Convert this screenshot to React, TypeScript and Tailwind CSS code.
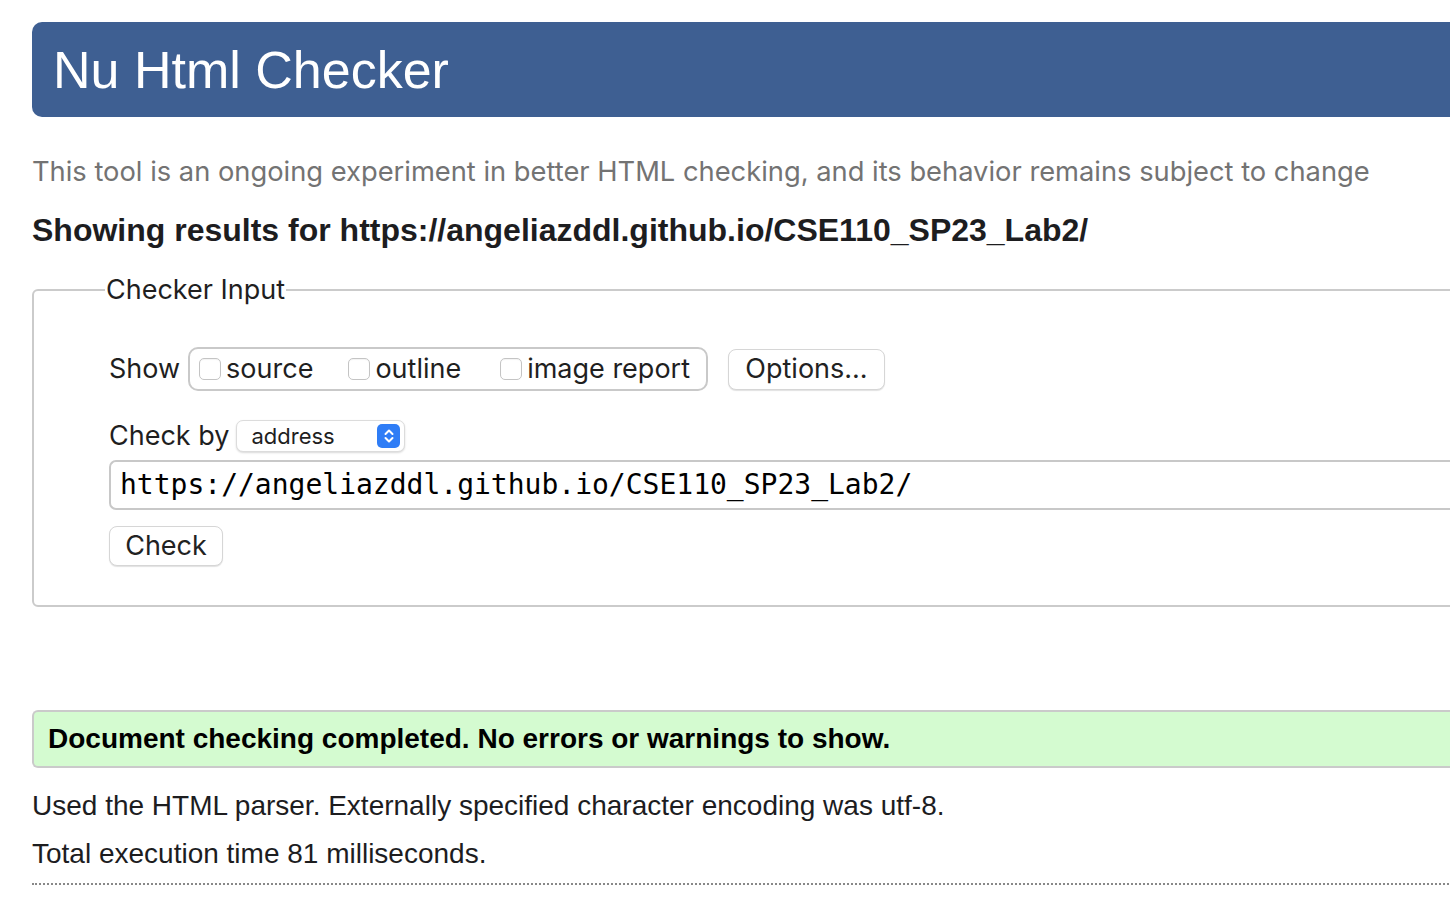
import React from 'react';

const sf = 'font-["Inter","Noto_Sans",sans-serif]';

function Checkbox({ label, className = '' }: { label: string; className?: string }) {
  return (
    <label className={'flex items-center gap-[5px] ' + className}>
      <span className="h-[22px] w-[22px] rounded-[5px] border border-[#c4c4c4] bg-white shadow-[inset_0_1px_1px_rgba(0,0,0,0.05)]" />
      <span>{label}</span>
    </label>
  );
}

function Button({ children, className = '' }: { children: React.ReactNode; className?: string }) {
  return (
    <button
      className={
        'flex items-center justify-center rounded-[8px] border border-[#d6d6d6] bg-white text-[#222] shadow-[0_1px_1px_rgba(0,0,0,0.12)] ' +
        className
      }
    >
      {children}
    </button>
  );
}

export default function App() {
  const url = 'https://angeliazddl.github.io/CSE110_SP23_Lab2/';
  return (
    <div className="h-[902px] w-[1450px] overflow-hidden bg-white">
      <div className="w-[1560px] pl-[32px] font-['Liberation_Sans',Arial,sans-serif] text-[#1d1d1f]">
        {/* Title bar */}
        <div className="mt-[22px] flex h-[95px] items-center rounded-l-[10px] bg-[#3e5f92] pl-[21px] text-[52px] leading-none text-white">
          Nu Html Checker
        </div>

        <p className={`${sf} mt-[39px] text-[27.3px] leading-[32px] text-[#737373]`}>
          This tool is an ongoing experiment in better HTML checking, and its behavior remains subject to change
        </p>

        <h2 className="mt-[24px] text-[32px] font-bold leading-[36px] text-[#1d1d1f]">
          Showing results for {url}
        </h2>

        {/* Checker input */}
        <fieldset className={`${sf} mt-[27px] rounded-[6px] border-2 border-[#cbcbcb] pb-[39px] text-[#1f1f1f]`}>
          <legend className="ml-[71px] px-[1px] text-[27px] leading-[30px]">Checker Input</legend>

          <div className="pl-[75px]">
            <div className="mt-[42px] flex items-center text-[27px]">
              <span className="mr-[8px]">Show</span>
              <div className="flex h-[44px] items-center gap-[35px] rounded-[10px] border-2 border-[#c9c9c9] pl-[9px] pr-[16px]">
                <Checkbox label="source" />
                <Checkbox label="outline" />
                <Checkbox label="image report" className="ml-[4px]" />
              </div>
              <Button className="ml-[20px] h-[41px] w-[157px] text-[27px]">Options...</Button>
            </div>

            <div className="mt-[29px] flex h-[32px] items-center text-[27px]">
              <span className="mr-[7px]">Check by</span>
              <div className="flex h-[32px] w-[169px] items-center justify-between rounded-[7px] border border-[#dcdcdc] bg-white pl-[14px] pr-[4px] text-[22px] shadow-[0_1px_2px_rgba(0,0,0,0.15)]">
                <span>address</span>
                <span className="flex h-[24px] w-[23px] items-center justify-center rounded-[5px] bg-[#2f7df6]">
                  <svg width="12" height="16" viewBox="0 0 12 16" fill="none" stroke="white" strokeWidth="2" strokeLinecap="round" strokeLinejoin="round">
                    <path d="M2.5 6 L6 2.5 L9.5 6" />
                    <path d="M2.5 10 L6 13.5 L9.5 10" />
                  </svg>
                </span>
              </div>
            </div>

            <div className="mt-[8px] flex h-[50px] items-center rounded-l-[7px] border-2 border-r-0 border-[#c8c8c8] pl-[9px] font-['DejaVu_Sans_Mono',monospace] text-[28px] text-black">
              {url}
            </div>

            <Button className="mt-[16px] h-[40px] w-[114px] text-[27px]">Check</Button>
          </div>
        </fieldset>

        {/* Result */}
        <div className="mt-[103px] flex h-[58px] items-center rounded-l-[6px] border-2 border-r-0 border-[#cacaca] bg-[#d4fbd0] pl-[14px] text-[28px] font-bold text-black">
          Document checking completed. No errors or warnings to show.
        </div>

        <p className="mt-[14px] text-[28px] leading-[48px]">
          Used the HTML parser. Externally specified character encoding was utf-8.
        </p>
        <p className="text-[28px] leading-[48px]">Total execution time 81 milliseconds.</p>
        <div className="mt-[5px] border-t-2 border-dotted border-[#888]" />
      </div>
    </div>
  );
}
